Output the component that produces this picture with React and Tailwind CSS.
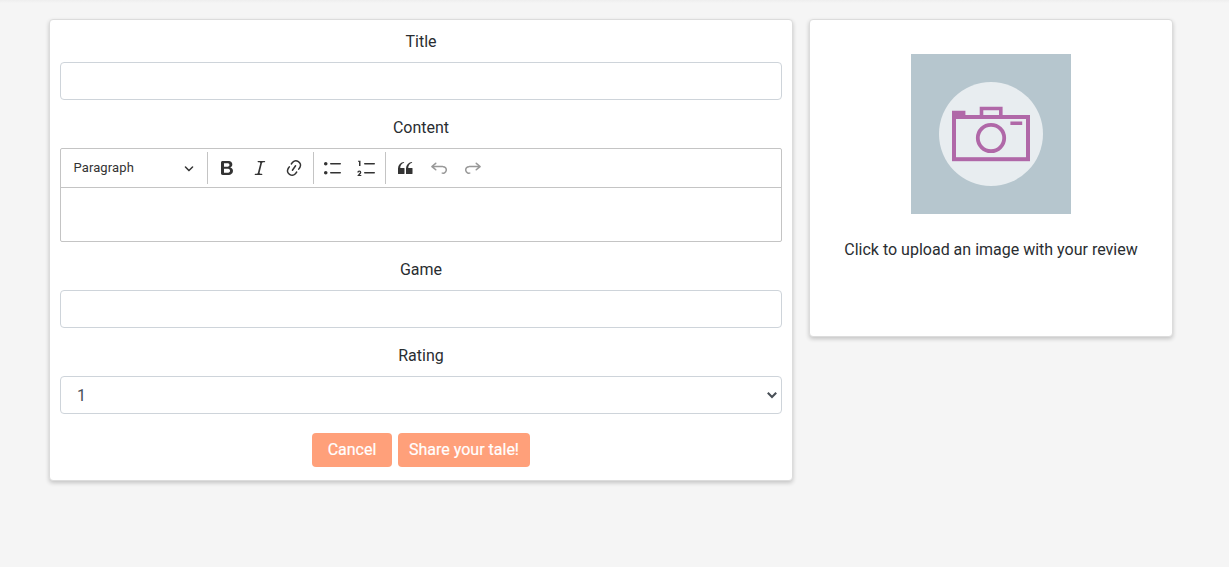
const ICONS = {
  bold: 'M10.187 17H5.773c-.637 0-1.092-.138-1.364-.415-.273-.277-.409-.718-.409-1.323V4.738c0-.617.14-1.062.419-1.332.279-.27.73-.406 1.354-.406h4.68c.69 0 1.288.041 1.793.124.506.083.96.242 1.36.477.341.197.644.447.906.75a3.262 3.262 0 0 1 .808 2.162c0 1.401-.722 2.426-2.167 3.075C15.05 10.175 16 11.315 16 13.01a3.756 3.756 0 0 1-2.296 3.504 6.1 6.1 0 0 1-1.517.377c-.571.073-1.238.11-2 .11zm-.217-6.217H7v4.087h3.069c1.977 0 2.965-.69 2.965-2.072 0-.707-.256-1.22-.768-1.537-.512-.319-1.277-.478-2.296-.478zM7 5.13v3.619h2.606c.729 0 1.292-.067 1.69-.2a1.6 1.6 0 0 0 .91-.765c.165-.267.247-.566.247-.897 0-.707-.26-1.176-.778-1.409-.519-.232-1.31-.348-2.375-.348H7z',
  italic: 'm9.586 14.633.021.004c-.036.335.095.655.393.962.082.083.173.15.274.201h1.474a.6.6 0 1 1 0 1.2H5.304a.6.6 0 0 1 0-1.2h1.15c.474-.07.809-.182 1.005-.334.157-.122.291-.32.404-.597l2.416-9.55a1.053 1.053 0 0 0-.281-.823 1.12 1.12 0 0 0-.442-.296H8.15a.6.6 0 0 1 0-1.2h6.443a.6.6 0 1 1 0 1.2h-1.195c-.376.056-.65.155-.823.296-.215.175-.423.439-.623.79l-2.366 9.347z',
  link: 'm11.077 15 .991-1.416a.75.75 0 1 1 1.229.86l-1.148 1.64a.748.748 0 0 1-.217.206 5.251 5.251 0 0 1-8.503-5.955.741.741 0 0 1 .12-.274l1.147-1.639a.75.75 0 1 1 1.228.86L4.933 10.7l.006.003a3.75 3.75 0 0 0 6.132 4.294l.006.004zm5.494-5.335a.748.748 0 0 1-.12.274l-1.147 1.639a.75.75 0 1 1-1.228-.86l.86-1.23a3.75 3.75 0 0 0-6.144-4.301l-.86 1.229a.75.75 0 0 1-1.229-.86l1.148-1.64a.748.748 0 0 1 .217-.206 5.251 5.251 0 0 1 8.503 5.955zm-4.563-2.532a.75.75 0 0 1 .184 1.045l-3.155 4.505a.75.75 0 1 1-1.229-.86l3.155-4.506a.75.75 0 0 1 1.045-.184z',
  bulleted: 'M7 5.75c0 .414.336.75.75.75h9.5a.75.75 0 1 0 0-1.5h-9.5a.75.75 0 0 0-.75.75zm-6 0C1 4.784 1.777 4 2.75 4c.966 0 1.75.777 1.75 1.75 0 .966-.777 1.75-1.75 1.75C1.784 7.5 1 6.723 1 5.75zm6 9c0 .414.336.75.75.75h9.5a.75.75 0 1 0 0-1.5h-9.5a.75.75 0 0 0-.75.75zm-6 0c0-.966.777-1.75 1.75-1.75.966 0 1.75.777 1.75 1.75 0 .966-.777 1.75-1.75 1.75-.966 0-1.75-.777-1.75-1.75z',
  numbered: 'M7 5.75c0 .414.336.75.75.75h9.5a.75.75 0 1 0 0-1.5h-9.5a.75.75 0 0 0-.75.75zM3.5 3v5H2V3.7H1v-1h2.5V3zM.343 17.857l2.59-3.257H2.92a.6.6 0 1 0-1.04 0H.302a2 2 0 1 1 3.995 0h-.001c-.048.405-.16.734-.333.988-.175.254-.59.692-1.244 1.312H4.3v1h-4l.043-.043zM7 14.75a.75.75 0 0 1 .75-.75h9.5a.75.75 0 1 1 0 1.5h-9.5a.75.75 0 0 1-.75-.75z',
  quote: 'M3 10.423a6.5 6.5 0 0 1 6.056-6.408l.038.67C6.448 5.423 5.354 7.663 5.22 10H9c.552 0 .5.432.5.986v4.511c0 .554-.448.503-1 .503h-5c-.552 0-.5-.449-.5-1.003v-4.574zm8 0a6.5 6.5 0 0 1 6.056-6.408l.038.67c-2.646.739-3.74 2.979-3.873 5.315H17c.552 0 .5.432.5.986v4.511c0 .554-.448.503-1 .503h-5c-.552 0-.5-.449-.5-1.003v-4.574z',
  undo: 'm5.042 9.367 2.189 1.837a.75.75 0 0 1-.965 1.149l-3.788-3.18a.747.747 0 0 1-.21-.284.75.75 0 0 1 .17-.945L6.23 4.762a.75.75 0 1 1 .964 1.15L4.863 7.866h8.917A.75.75 0 0 1 14 7.9a4 4 0 1 1-1.477 7.718l.344-1.489a2.5 2.5 0 1 0 1.094-4.73l.008-.032H5.042z',
  redo: 'm14.958 9.367-2.189 1.837a.75.75 0 0 0 .965 1.149l3.788-3.18a.747.747 0 0 0 .21-.284.75.75 0 0 0-.17-.945L13.77 4.762a.75.75 0 1 0-.964 1.15l2.331 1.955H6.22A.75.75 0 0 0 6 7.9a4 4 0 1 0 1.477 7.718l-.344-1.489A2.5 2.5 0 1 1 6.039 9.4l-.008-.032h8.927z',
};

function Tool({ name, disabled }) {
  return (
    <button
      type="button"
      aria-label={name}
      className={`flex h-[30px] w-[29.98px] shrink-0 items-center justify-center text-[#333] ${disabled ? 'opacity-50' : ''}`}
    >
      <svg viewBox="0 0 20 20" className="size-5 shrink-0" fill="currentColor">
        <path d={ICONS[name]} />
      </svg>
    </button>
  );
}

function Separator() {
  return <span className="h-8 w-px shrink-0 bg-[#c4c4c4]" />;
}

function Field({ label, children }) {
  return (
    <div className="mb-4 flex flex-col">
      <label className="mb-2 text-center leading-6">{label}</label>
      {children}
    </div>
  );
}

function Editor() {
  return (
    <div className="h-[94px] rounded-[2px] border border-[#c4c4c4]">
      <div className="flex h-[39px] items-center gap-[3.84px] border-b border-[#c4c4c4]">
        <button type="button" className="flex h-[30px] w-[142px] shrink-0 items-center justify-between pr-[9px] pl-[12.5px] text-[13px] text-[#333]">
          <span className="tracking-[0.11px]">Paragraph</span>
          <svg viewBox="0 0 10 10" className="size-[10px]" fill="currentColor">
            <path d="M.941 4.523a.75.75 0 1 1 1.06-1.06l3.006 3.005 3.005-3.005a.75.75 0 1 1 1.06 1.06l-3.549 3.55a.75.75 0 0 1-1.168-.136L.941 4.523z" />
          </svg>
        </button>
        <Separator />
        <Tool name="bold" />
        <Tool name="italic" />
        <Tool name="link" />
        <Separator />
        <Tool name="bulleted" />
        <Tool name="numbered" />
        <Separator />
        <Tool name="quote" />
        <Tool name="undo" disabled />
        <Tool name="redo" disabled />
      </div>
    </div>
  );
}

function CameraImage() {
  return (
    <svg viewBox="0 0 160 160" className="size-40">
      <rect width="160" height="160" fill="#b6c6ce" />
      <circle cx="80" cy="80" r="52" fill="#e8edf0" />
      <g fill="none" stroke="#b068a8">
        <rect x="43" y="63" width="74" height="42.2" strokeWidth="4" />
        <path d="M70.5 62V54.5H89.8V62" strokeWidth="3.6" />
        <circle cx="80" cy="84" r="13.2" strokeWidth="3.8" />
      </g>
      <path d="M41 56.7h13.4V62H41zM99.4 67.4h11.8v3.6H99.4z" fill="#b068a8" />
    </svg>
  );
}

const CARD = 'rounded border border-[#dcdcdc] bg-white shadow-[0_2px_4px_rgba(0,0,0,0.2)]';

export default function App() {
  return (
    <div className="min-h-screen bg-[#f5f5f5] font-['Roboto',sans-serif] text-base text-[#292d31]">
      <div className="h-[3px] bg-linear-to-b from-[#eeeeee] to-[#f5f5f5]" />
      <main className="flex items-start gap-4 pt-4 pl-[49px]">
        <form className={`h-[462px] w-[744px] px-[10px] pt-[10px] ${CARD}`}>
          <Field label="Title">
            <input className="h-[38px] w-full rounded border border-[#ced4da] px-3" />
          </Field>
          <Field label="Content">
            <Editor />
          </Field>
          <Field label="Game">
            <input className="h-[38px] w-full rounded border border-[#ced4da] px-3" />
          </Field>
          <Field label="Rating">
            <div className="flex h-[38px] items-center justify-between rounded border border-[#ced4da] pr-[4px] pl-4 text-[#495057]">
              <span className="pt-[2px]">1</span>
              <svg viewBox="0 0 10 8" className="w-[10px]" fill="none" stroke="#495057" strokeWidth="2.1">
                <path d="M.8 1.8 5 6 9.2 1.8" />
              </svg>
            </div>
          </Field>
          <div className="mt-[19px] flex justify-center gap-[6px] text-white">
            <button type="button" className="h-[34px] w-20 rounded bg-[#ffa07a] [-webkit-text-stroke:0.2px_white]">Cancel</button>
            <button type="button" className="h-[34px] w-[132px] rounded bg-[#ffa07a] [-webkit-text-stroke:0.2px_white]">Share your tale!</button>
          </div>
        </form>
        <section className={`flex h-[318px] w-[364px] flex-col items-center pt-[34px] ${CARD}`}>
          <CameraImage />
          <p className="mt-6 leading-6">Click to upload an image with your review</p>
        </section>
      </main>
    </div>
  );
}
